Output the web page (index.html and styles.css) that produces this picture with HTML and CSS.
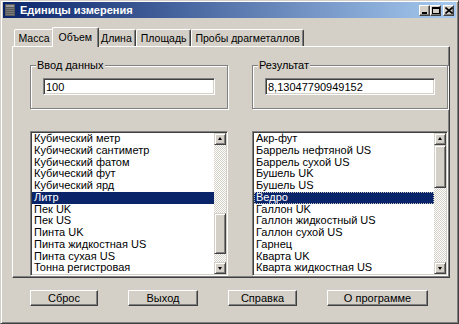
FILE: index.html
```html
<!DOCTYPE html>
<html lang="ru">
<head>
    <meta charset="UTF-8">
    <title>Единицы измерения</title>
    <link rel="stylesheet" href="styles.css">
</head>
<body>
    <div class="window">
        <div class="titlebar">
            <span class="title-icon">
                <svg width="10" height="12" viewBox="0 0 10 12">
                    <rect x="0" y="0" width="10" height="12" fill="#5a5a5a"/>
                    <rect x="1" y="1" width="8" height="2" fill="#9a9a9a"/>
                    <rect x="1" y="4" width="8" height="1" fill="#7a7a7a"/>
                    <rect x="1" y="6" width="8" height="1" fill="#7a7a7a"/>
                    <rect x="1" y="8" width="8" height="1" fill="#7a7a7a"/>
                    <rect x="1" y="10" width="8" height="1" fill="#7a7a7a"/>
                </svg>
            </span>
            <span class="title">Единицы измерения</span>
            <div class="title-buttons">
                <span class="tbtn">
                    <svg width="8" height="7" viewBox="0 0 8 7"><rect x="1" y="5" width="5" height="2" fill="#000"/></svg>
                </span>
                <span class="tbtn">
                    <svg width="8" height="7" viewBox="0 0 8 7"><rect x="0.5" y="0.5" width="7" height="6" fill="none" stroke="#000"/><rect x="0" y="0" width="8" height="2" fill="#000"/></svg>
                </span>
                <span class="tbtn close">
                    <svg width="8" height="7" viewBox="0 0 8 7"><path d="M0.5 0.5 L7.5 6.5 M7.5 0.5 L0.5 6.5" stroke="#000" stroke-width="1.6"/></svg>
                </span>
            </div>
        </div>

        <div class="content">
            <div class="tabs">
                <div class="tab">Масса</div>
                <div class="tab active">Объем</div>
                <div class="tab">Длина</div>
                <div class="tab">Площадь</div>
                <div class="tab">Пробы драгметаллов</div>
            </div>

            <div class="panel">
                <div class="group">
                    <span class="group-label">Ввод данных</span>
                    <input class="field" type="text" value="100">
                </div>
                <div class="group">
                    <span class="group-label">Результат</span>
                    <input class="field" type="text" value="8,13047790949152">
                </div>

                <div class="listbox">
                    <ul class="items">
                        <li>Кубический метр</li>
                        <li>Кубический сантиметр</li>
                        <li>Кубический фатом</li>
                        <li>Кубический фут</li>
                        <li>Кубический ярд</li>
                        <li class="selected">Литр</li>
                        <li>Пек UK</li>
                        <li>Пек US</li>
                        <li>Пинта UK</li>
                        <li>Пинта жидкостная US</li>
                        <li>Пинта сухая US</li>
                        <li>Тонна регистровая</li>
                    </ul>
                    <div class="scrollbar">
                        <span class="arrow up"></span>
                        <div class="track">
                            <span class="thumb" style="margin-top: 68px; height: 41px;"></span>
                        </div>
                        <span class="arrow down"></span>
                    </div>
                </div>

                <div class="listbox">
                    <ul class="items">
                        <li>Акр-фут</li>
                        <li>Баррель нефтяной US</li>
                        <li>Баррель сухой US</li>
                        <li>Бушель UK</li>
                        <li>Бушель US</li>
                        <li class="selected focus">Ведро</li>
                        <li>Галлон UK</li>
                        <li>Галлон жидкостный US</li>
                        <li>Галлон сухой US</li>
                        <li>Гарнец</li>
                        <li>Кварта UK</li>
                        <li>Кварта жидкостная US</li>
                    </ul>
                    <div class="scrollbar">
                        <span class="arrow up"></span>
                        <div class="track">
                            <span class="thumb" style="margin-top: 0px; height: 43px;"></span>
                        </div>
                        <span class="arrow down"></span>
                    </div>
                </div>
            </div>

            <div class="buttons">
                <button class="btn w-reset">Сброс</button>
                <button class="btn w-exit">Выход</button>
                <button class="btn w-help">Справка</button>
                <button class="btn w-about">О программе</button>
            </div>
        </div>
    </div>
</body>
</html>
```

FILE: styles.css
```css
* { box-sizing: border-box; font-family: "Liberation Sans", Arial, sans-serif; font-size: 11px; }
body { margin: 0; background: #d4d0c8; }

.window { width: 459px; height: 324px; background: #d4d0c8; border: 1px solid; border-color: #d4d0c8 #404040 #404040 #d4d0c8; box-shadow: inset 1px 1px #fff, inset -1px -1px #808080; padding: 1px 2px 0 2px; }

.titlebar { height: 16px; display: flex; align-items: center; background: linear-gradient(to right, #0a246a, #a6caf0); padding: 0 2px 0 2px; }
.title-icon { width: 12px; height: 12px; display: flex; align-items: center; }
.title { color: #fff; font-weight: bold; margin-left: 3px; }
.title-buttons { margin-left: auto; display: flex; gap: 0; }
.tbtn { width: 11px; height: 11px; background: #d4d0c8; border: 1px solid; border-color: #fff #404040 #404040 #fff; box-shadow: inset -1px -1px #808080; display: flex; align-items: center; justify-content: center; }
.tbtn svg { display: block; }
.tbtn.close { margin-left: 2px; }

.content { padding: 9px 6px 0 9px; }

.tabs { display: flex; align-items: flex-end; height: 19px; padding-left: 2px; position: relative; z-index: 1; }
.tab { height: 17px; line-height: 16px; padding: 0 3.5px; font-size: 10.5px; border: 1px solid; border-bottom: none; border-color: #fff #404040 #fff #fff; box-shadow: inset -1px 0 #808080; border-radius: 2px 2px 0 0; background: #d4d0c8; color: #000; }
.tab.active { height: 20px; line-height: 18px; margin: 0 -2px -1px -2px; padding: 0 5.5px; position: relative; z-index: 2; }

.panel { height: 232px; border: 1px solid; border-color: #fff #404040 #404040 #fff; box-shadow: inset -1px -1px #808080; padding: 18px 0 0 17px; display: grid; grid-template-columns: 198px 196px; column-gap: 24px; row-gap: 22px; align-content: start; }

.group { position: relative; height: 44px; border: 1px solid #808080; box-shadow: inset 1px 1px #fff, 1px 1px #fff; padding: 12px 12px 0 12px; }
.group-label { position: absolute; top: -7px; left: 5px; padding: 0 1px; line-height: 13px; background: #d4d0c8; color: #000; }
.field { display: block; width: 100%; height: 17px; border: 1px solid; border-color: #808080 #fff #fff #808080; box-shadow: inset 1px 1px #404040, inset -1px -1px #d4d0c8; background: #fff; padding: 0 2px; color: #000; outline: none; }

.listbox { height: 145px; display: flex; background: #fff; border: 1px solid; border-color: #808080 #fff #fff #808080; box-shadow: inset 1px 1px #404040, inset -1px -1px #d4d0c8; padding: 1px; overflow: hidden; }
.items { flex: 1; list-style: none; margin: 0; padding: 0; overflow: hidden; }
.items li { height: 11.75px; line-height: 11.75px; padding-left: 2px; white-space: nowrap; color: #000; }
.items li.selected { background: #0a246a; color: #fff; }
.items li.focus { outline: 1px dotted #c0c0c0; outline-offset: -1px; }

.scrollbar { width: 12px; display: flex; flex-direction: column; }
.arrow { flex: none; height: 12px; background: #d4d0c8; border: 1px solid; border-color: #d4d0c8 #404040 #404040 #d4d0c8; box-shadow: inset 1px 1px #fff, inset -1px -1px #808080; position: relative; }
.arrow::after { content: ""; position: absolute; left: 3px; width: 0; height: 0; border-left: 2px solid transparent; border-right: 2px solid transparent; }
.arrow.up::after { top: 3px; border-bottom: 3px solid #000; }
.arrow.down::after { top: 4px; border-top: 3px solid #000; }
.track { flex: 1; display: flex; flex-direction: column; background-color: #fff; background-image: repeating-conic-gradient(#d4d0c8 0 25%, #fff 0 50%); background-size: 2px 2px; }
.thumb { display: block; flex: none; background: #d4d0c8; border: 1px solid; border-color: #d4d0c8 #404040 #404040 #d4d0c8; box-shadow: inset 1px 1px #fff, inset -1px -1px #808080; }

.buttons { display: flex; gap: 30px; padding: 12px 0 0 18px; }
.btn { height: 16px; padding: 0; background: #d4d0c8; color: #000; border: 1px solid; border-color: #fff #404040 #404040 #fff; box-shadow: inset -1px -1px #808080; }
.w-reset { width: 68px; }
.w-exit { width: 70px; }
.w-help { width: 69px; }
.w-about { width: 101px; }
```
